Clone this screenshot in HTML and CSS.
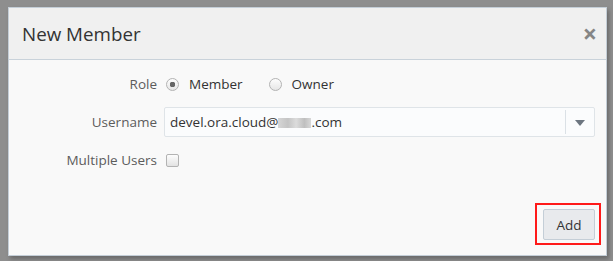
FILE: index.html
```html
<!DOCTYPE html>
<html lang="en">
<head>
    <meta charset="UTF-8">
    <title>New Member</title>
    <link rel="stylesheet" href="styles.css">
</head>
<body>
    <div class="dialog">
        <div class="dialog-header">
            <h1 class="dialog-title">New Member</h1>
            <span class="close">&times;</span>
        </div>

        <form class="dialog-body">
            <label class="field-label">Role</label>
            <div class="field radios">
                <label class="radio-item"><input type="radio" name="role" checked> Member</label>
                <label class="radio-item"><input type="radio" name="role"> Owner</label>
            </div>

            <label class="field-label">Username</label>
            <div class="field">
                <div class="combo">
                    <span class="combo-value">devel.ora.cloud@<span class="blurred"></span>.com</span>
                    <span class="combo-sep"></span>
                    <span class="combo-arrow"></span>
                </div>
            </div>

            <label class="field-label">Multiple Users</label>
            <div class="field">
                <input type="checkbox" class="check">
            </div>
        </form>

        <div class="dialog-footer">
            <span class="highlight">
                <button type="button" class="btn">Add</button>
            </span>
        </div>
    </div>
</body>
</html>
```

FILE: styles.css
```css
html, body {
    margin: 0;
    height: 261px;
    overflow: hidden;
}
body {
    background-color: #8e8e8e;
    font-family: "Open Sans", "Noto Sans", Arial, sans-serif;
    padding: 7px 0 0 8px;
    box-sizing: border-box;
}
.dialog {
    width: 599px;
    height: 249px;
    box-sizing: border-box;
    border: 1px solid #c4ced7;
    background-color: #f9f9f9;
    box-shadow: 2px 3px 4px rgba(0, 0, 0, 0.25);
    display: flex;
    flex-direction: column;
}
.dialog-header {
    height: 52px;
    box-sizing: border-box;
    background-color: #f0f0f0;
    border-bottom: 1px solid #c9d2da;
    display: flex;
    align-items: center;
    padding: 0 9px 0 13px;
}
.dialog-title {
    flex: 1;
    margin: 0;
    font-size: 18.8px;
    font-weight: normal;
    color: #333;
}
.close {
    font-size: 25px;
    font-weight: bold;
    color: #858585;
    line-height: 1;
    margin-top: -1px;
}
.dialog-body {
    display: grid;
    grid-template-columns: 148px 1fr;
    grid-auto-rows: 30px;
    column-gap: 7px;
    row-gap: 8px;
    padding: 9px 11px 0 0;
    margin: 0;
    font-size: 13.5px;
}
.field-label {
    text-align: right;
    align-self: center;
    color: #5c5c5c;
}
.field {
    display: flex;
    align-items: center;
}
.radios {
    gap: 24px;
}
.radio-item {
    display: flex;
    align-items: center;
    gap: 5px;
    color: #333;
}
input[type="radio"] {
    appearance: none;
    margin: 0 5px 0 2px;
    width: 13px;
    height: 13px;
    border: 1px solid #b3b3b3;
    border-radius: 50%;
    background: linear-gradient(#fdfdfd, #e6e6e6);
    box-sizing: border-box;
}
input[type="radio"]:checked {
    background: radial-gradient(circle, #666 0 2.6px, transparent 3px), linear-gradient(#fdfdfd, #e6e6e6);
}
.combo {
    flex: 1;
    height: 30px;
    box-sizing: border-box;
    border: 1px solid #dfe4e8;
    border-radius: 2px;
    background-color: #fbfcfd;
    display: flex;
    align-items: center;
    padding-left: 5px;
    color: #333;
}
.combo-value {
    flex: 1;
    display: flex;
    align-items: center;
}
.blurred {
    display: inline-block;
    width: 33px;
    height: 10px;
    margin-top: 2px;
    background: linear-gradient(90deg, #d6d6d6, #c4c4c4 30%, #dcdcdc 55%, #bfbfbf 80%, #d8d8d8);
}
.combo-sep {
    width: 1px;
    height: 24px;
    background-color: #dbe1e6;
}
.combo-arrow {
    width: 0;
    height: 0;
    margin: 2px 9px 0 9px;
    border-left: 5px solid transparent;
    border-right: 5px solid transparent;
    border-top: 6px solid #6d7680;
}
.check {
    appearance: none;
    margin: 0 0 0 2px;
    width: 13px;
    height: 13px;
    border: 1px solid #b3b3b3;
    border-radius: 2px;
    background: linear-gradient(#fdfdfd, #e3e3e3);
    box-sizing: border-box;
}
.dialog-footer {
    margin-top: auto;
    display: flex;
    justify-content: flex-end;
    padding: 0 5px 10px 0;
}
.highlight {
    border: 2px solid #ff1a1a;
    padding: 4px 4px 3px 6px;
    display: flex;
}
.btn {
    width: 52px;
    height: 31px;
    border: 1px solid #c4ced7;
    border-radius: 2px;
    background-color: #e8eaed;
    font-family: inherit;
    font-size: 13.5px;
    color: #333;
    padding: 0;
}
```
